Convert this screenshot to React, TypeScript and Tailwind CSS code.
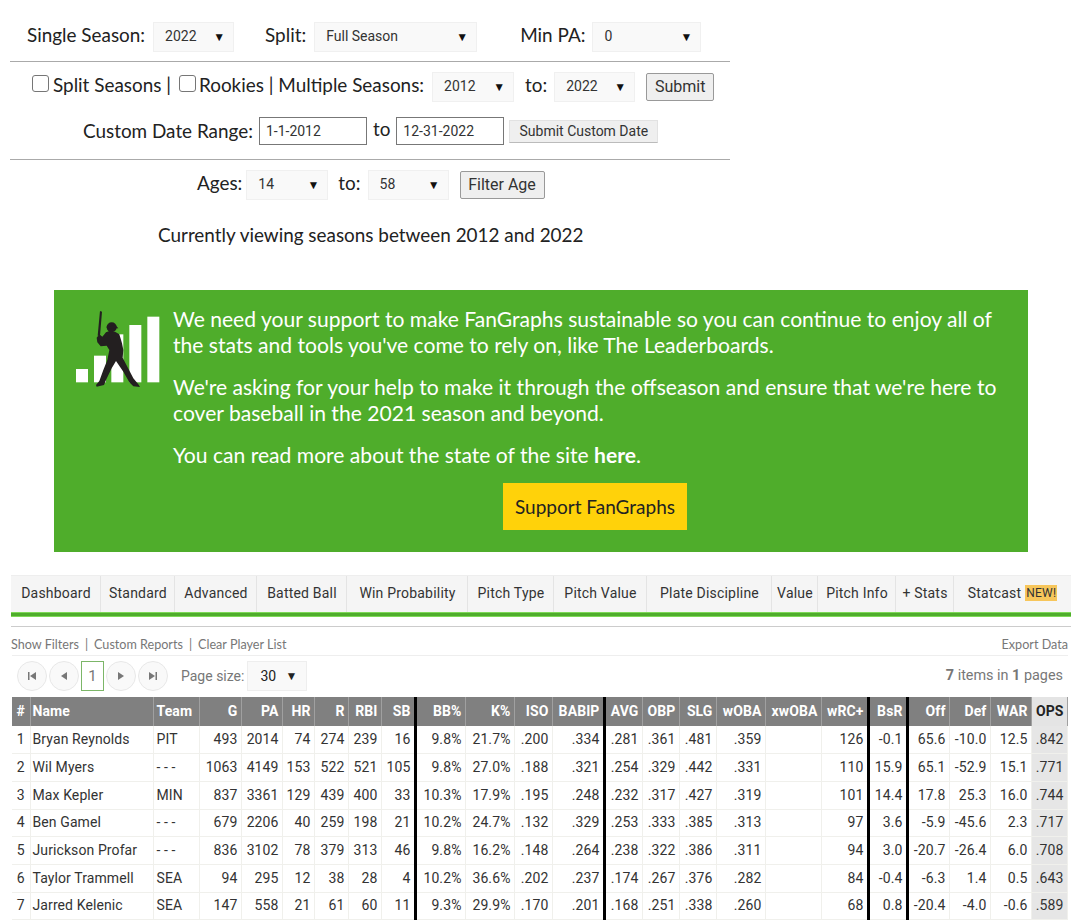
import type { ReactNode } from "react";

const columns = [
  { label: "#", width: "w-[18px]", align: "text-center" },
  { label: "Name", width: "w-[123px]", align: "text-left" },
  { label: "Team", width: "w-[46px]", align: "text-left" },
  { label: "G", width: "w-[42px]", align: "text-right" },
  { label: "PA", width: "w-[41px]", align: "text-right" },
  { label: "HR", width: "w-[32px]", align: "text-right" },
  { label: "R", width: "w-[34px]", align: "text-right" },
  { label: "RBI", width: "w-[33px]", align: "text-right" },
  { label: "SB", width: "w-[34px]", align: "text-right", thick: true },
  { label: "BB%", width: "w-[50px]", align: "text-right" },
  { label: "K%", width: "w-[49px]", align: "text-right" },
  { label: "ISO", width: "w-[38px]", align: "text-right" },
  { label: "BABIP", width: "w-[52px]", align: "text-right", thick: true },
  { label: "AVG", width: "w-[38px]", align: "text-right" },
  { label: "OBP", width: "w-[37px]", align: "text-right" },
  { label: "SLG", width: "w-[37px]", align: "text-right" },
  { label: "wOBA", width: "w-[49px]", align: "text-right" },
  { label: "xwOBA", width: "w-[56px]", align: "text-right" },
  { label: "wRC+", width: "w-[47px]", align: "text-right", thick: true },
  { label: "BsR", width: "w-[39px]", align: "text-right", thick: true },
  { label: "Off", width: "w-[42px]", align: "text-right" },
  { label: "Def", width: "w-[41px]", align: "text-right" },
  { label: "WAR", width: "w-[41px]", align: "text-right" },
  { label: "OPS", width: "w-[36px]", align: "text-right" },
];

const rows = [
  ["1", "Bryan Reynolds", "PIT", "493", "2014", "74", "274", "239", "16", "9.8%", "21.7%", ".200", ".334", ".281", ".361", ".481", ".359", "", "126", "-0.1", "65.6", "-10.0", "12.5", ".842"],
  ["2", "Wil Myers", "- - -", "1063", "4149", "153", "522", "521", "105", "9.8%", "27.0%", ".188", ".321", ".254", ".329", ".442", ".331", "", "110", "15.9", "65.1", "-52.9", "15.1", ".771"],
  ["3", "Max Kepler", "MIN", "837", "3361", "129", "439", "400", "33", "10.3%", "17.9%", ".195", ".248", ".232", ".317", ".427", ".319", "", "101", "14.4", "17.8", "25.3", "16.0", ".744"],
  ["4", "Ben Gamel", "- - -", "679", "2206", "40", "259", "198", "21", "10.2%", "24.7%", ".132", ".329", ".253", ".333", ".385", ".313", "", "97", "3.6", "-5.9", "-45.6", "2.3", ".717"],
  ["5", "Jurickson Profar", "- - -", "836", "3102", "78", "379", "313", "46", "9.8%", "16.2%", ".148", ".264", ".238", ".322", ".386", ".311", "", "94", "3.0", "-20.7", "-26.4", "6.0", ".708"],
  ["6", "Taylor Trammell", "SEA", "94", "295", "12", "38", "28", "4", "10.2%", "36.6%", ".202", ".237", ".174", ".267", ".376", ".282", "", "84", "-0.4", "-6.3", "1.4", "0.5", ".643"],
  ["7", "Jarred Kelenic", "SEA", "147", "558", "21", "61", "60", "11", "9.3%", "29.9%", ".170", ".201", ".168", ".251", ".338", ".260", "", "68", "0.8", "-20.4", "-4.0", "-0.6", ".589"],
];

const tabs = [
  { label: "Dashboard", width: "w-[90px]" },
  { label: "Standard", width: "w-[74px]" },
  { label: "Advanced", width: "w-[82px]" },
  { label: "Batted Ball", width: "w-[90px]" },
  { label: "Win Probability", width: "w-[121px]" },
  { label: "Pitch Type", width: "w-[86px]" },
  { label: "Pitch Value", width: "w-[93px]" },
  { label: "Plate Discipline", width: "w-[125px]" },
  { label: "Value", width: "w-[46px]" },
  { label: "Pitch Info", width: "w-[78px]" },
  { label: "+ Stats", width: "w-[58px]" },
];

function Select({ value, className }: { value: string; className: string }) {
  return (
    <span className={`relative block h-[30px] shrink-0 ${className}`}>
      <select
        defaultValue={value}
        className="block h-full w-full appearance-none border border-[#f0f0f0] bg-[#f9f9f9] pb-[2px] pl-[11px] font-['Roboto',sans-serif] text-[14px] text-[#333] outline-none"
      >
        <option>{value}</option>
      </select>
      <span className="pointer-events-none absolute right-[9px] top-[7px] text-[12px] leading-[16px] text-[#111]">▼</span>
    </span>
  );
}

function Label({ children, className = "" }: { children: ReactNode; className?: string }) {
  return <span className={`pb-[4px] ${className}`}>{children}</span>;
}

function GrayButton({ children, className }: { children: ReactNode; className: string }) {
  return (
    <button className={`shrink-0 rounded-[2px] border border-[#999] bg-[#efefef] font-['Roboto',sans-serif] text-[#333] ${className}`}>
      {children}
    </button>
  );
}

function PagerButton({ d, className = "" }: { d: string; className?: string }) {
  return (
    <span className={`flex h-[30px] w-[30px] items-center justify-center rounded-full border border-[#e8e8e8] bg-[#f9f9f9] ${className}`}>
      <svg viewBox="0 0 10 10" className="h-[10px] w-[10px] fill-[#777]">
        <path d={d} />
      </svg>
    </span>
  );
}

function BannerLogo() {
  return (
    <svg viewBox="0 0 300 270" className="h-[90px] w-[100px] shrink-0">
      <g fill="#fff">
        <rect x="18" y="192" width="36" height="40" />
        <rect x="72" y="152" width="36" height="80" />
        <rect x="124" y="88" width="36" height="144" />
        <rect x="178" y="60" width="36" height="172" />
        <rect x="232" y="35" width="36" height="197" />
      </g>
      <g fill="#231f20">
        <path d="M90 18 L96 20 L90 92 L83 92 Z" />
        <circle cx="125" cy="67" r="15" />
        <path d="M110 64 L138 62 L145 70 L112 72 Z" />
        <path d="M80 98 L88 88 L97 95 L108 82 L118 78 L135 80 L148 88 L156 115 L160 135 L158 158 L172 185 L190 220 L205 238 L210 246 L190 244 L178 232 L160 200 L138 168 L125 190 L108 225 L102 240 L80 245 L78 240 L88 228 L100 195 L112 165 L118 135 L110 122 L92 124 L82 112 Z" />
      </g>
    </svg>
  );
}

export default function App() {
  return (
    <div className="h-[922px] w-[1080px] overflow-hidden bg-white font-['Lato',sans-serif] text-[#222]">
      <div className="ml-[10px] w-[720px] pt-[22px] text-[18.9px]">
        <div className="flex h-[30px] items-center pl-[17px]">
          <Label>Single Season:</Label>
          <Select value="2022" className="ml-[8px] w-[81px]" />
          <Label className="ml-[31px]">Split:</Label>
          <Select value="Full Season" className="ml-[8px] w-[163px]" />
          <Label className="ml-[43px]">Min PA:</Label>
          <Select value="0" className="ml-[7px] w-[109px]" />
        </div>
        <hr className="mt-[9px] border-t-[1px] border-[#aaa]" />
        <div className="mt-[10px] flex h-[30px] items-center pl-[22px]">
          <input type="checkbox" className="mb-[8px] h-[17px] w-[17px] appearance-none rounded-[3px] border border-[#767676] bg-white" />
          <Label className="ml-[4px]">Split Seasons |</Label>
          <input type="checkbox" className="mb-[8px] ml-[8px] h-[17px] w-[17px] appearance-none rounded-[3px] border border-[#767676] bg-white" />
          <Label className="ml-[3px]">Rookies | Multiple Seasons:</Label>
          <Select value="2012" className="ml-[8px] w-[82px]" />
          <Label className="ml-[11px]">to:</Label>
          <Select value="2022" className="ml-[7px] w-[81px]" />
          <GrayButton className="ml-[11px] h-[28px] w-[68px] text-[16px]">Submit</GrayButton>
        </div>
        <div className="mt-[15px] flex h-[28px] items-center pl-[73px]">
          <span>Custom Date Range:</span>
          <input defaultValue="1-1-2012" className="ml-[6px] h-[28px] w-[108px] border border-[#777] bg-white px-[6px] font-['Roboto',sans-serif] text-[14px] text-[#333]" />
          <Label className="ml-[6px]">to</Label>
          <input defaultValue="12-31-2022" className="ml-[6px] h-[28px] w-[108px] border border-[#777] bg-white px-[6px] font-['Roboto',sans-serif] text-[14px] text-[#333]" />
          <button className="ml-[5px] h-[23px] w-[149px] border border-[#e2e2e2] border-b-[#bbb] bg-[#efefef] font-['Roboto',sans-serif] text-[14px] text-[#333]">
            Submit Custom Date
          </button>
        </div>
        <hr className="mt-[14px] border-t-[1px] border-[#aaa]" />
        <div className="mt-[10px] flex h-[30px] items-center pl-[187px]">
          <Label>Ages:</Label>
          <Select value="14" className="ml-[4px] w-[82px]" />
          <Label className="ml-[10px]">to:</Label>
          <Select value="58" className="ml-[7px] w-[81px]" />
          <GrayButton className="ml-[11px] mb-[1px] h-[28px] w-[85px] text-[16px]">Filter Age</GrayButton>
        </div>
        <p className="mt-[20px] pl-[148px] leading-[30px]">Currently viewing seasons between 2012 and 2022</p>
      </div>

      <section className="ml-[54px] mt-[40px] flex h-[262px] w-[974px] bg-[#4fad2b] text-[21.1px] leading-[26px] text-white">
        <div className="ml-[16px] mt-[15px]">
          <BannerLogo />
        </div>
        <div className="ml-[3px] mt-[16px] w-[845px]">
          <p>We need your support to make FanGraphs sustainable so you can continue to enjoy all of the stats and tools you've come to rely on, like The Leaderboards.</p>
          <p className="mt-[16px]">We're asking for your help to make it through the offseason and ensure that we're here to cover baseball in the 2021 season and beyond.</p>
          <p className="mt-[16px]">You can read more about the state of the site <b>here</b>.</p>
          <button className="ml-[330px] mt-[15px] h-[47px] w-[184px] bg-[#ffd20a] text-[19px] text-[#222]">Support FanGraphs</button>
        </div>
      </section>

      <nav className="ml-[11px] mt-[23px] flex h-[37px] w-[1060px] border-t border-[#eee] bg-[#f5f5f5] font-['Roboto',sans-serif] text-[14px] tracking-[0.2px] text-[#333]">
        {tabs.map((tab) => (
          <a key={tab.label} className={`flex items-center justify-center border-r border-[#e4e4e4] pb-[2px] pl-[1px] ${tab.width}`}>
            {tab.label}
          </a>
        ))}
        <a className="flex w-[117px] items-center justify-center gap-[4px] pb-[2px]">
          Statcast
          <span className="bg-[#f7c65b] px-[1px] text-[12px] leading-[16px]">NEW!</span>
        </a>
      </nav>
      <div className="ml-[11px] h-[5px] w-[1060px] border-y border-[#7ed957] bg-[#4fad2b]" />
      <hr className="ml-[11px] mt-[9px] w-[1060px] border-t border-[#ccc]" />

      <div className="ml-[11px] mt-[11px] flex h-[14px] w-[1057px] items-center justify-between text-[12.6px] text-[#777]">
        <div className="flex gap-[6px]">
          <span>Show Filters</span>
          <span>|</span>
          <span>Custom Reports</span>
          <span>|</span>
          <span>Clear Player List</span>
        </div>
        <span>Export Data</span>
      </div>

      <div className="ml-[12px] mt-[3px] flex h-[42px] w-[1056px] items-center border-t border-[#eee] pb-[1px] pl-[5px] pr-[5px] font-['Roboto',sans-serif] text-[14px] text-[#777]">
        <PagerButton d="M1 1h1.5v8H1zM9 1v8L3 5z" />
        <PagerButton d="M8 1v8L2 5z" className="ml-[2px]" />
        <span className="ml-[2px] flex h-[30px] w-[23px] items-center justify-center border border-[#7cb668] text-[15px]">1</span>
        <PagerButton d="M2 1v8l6-4z" className="ml-[2px]" />
        <PagerButton d="M1 1v8l6-4zM7.5 1H9v8H7.5z" className="ml-[2px]" />
        <span className="ml-[13px]">Page size:</span>
        <span className="relative ml-[3px] flex h-[30px] w-[60px] items-center border border-[#eee] bg-[#f9f9f9] pl-[12px] text-[#222]">
          30
          <span className="absolute right-[9px] top-[6px] text-[12px] leading-[16px]">▼</span>
        </span>
        <span className="ml-auto text-[14.4px]"><b>7</b> items in <b>1</b> pages</span>
      </div>

      <table className="ml-[12px] w-[1055px] table-fixed border-collapse font-['Roboto',sans-serif] text-[14px] tracking-[0.1px] text-[#333]">
        <colgroup>
          {columns.map((col) => (
            <col key={col.label} className={col.width} />
          ))}
        </colgroup>
        <thead>
          <tr className="h-[29px]">
            {columns.map((col) => (
              <th
                key={col.label}
                className={`overflow-hidden whitespace-nowrap py-0 pr-[3px] font-bold ${col.label === "Name" ? "pl-[2px]" : "pl-[3px]"} ${col.align} ${
                  col.label === "OPS" ? "bg-[#e4e4e4] text-[#222]" : "bg-[#808080] text-white"
                } ${col.thick ? "border-r-[3px] border-r-black" : "border-r border-r-[#a0a0a0]"}`}
              >
                {col.label}
              </th>
            ))}
          </tr>
        </thead>
        <tbody>
          {rows.map((row) => (
            <tr key={row[0]} className="h-[27.7px] border-b border-[#f0f0ec]">
              {row.map((value, i) => (
                <td
                  key={columns[i].label}
                  className={`overflow-hidden whitespace-nowrap pr-[3px] ${i === 1 ? "pl-[2px]" : "pl-[3px]"} ${columns[i].align} ${
                    columns[i].thick ? "border-r-[3px] border-r-black" : "border-r border-r-[#f0f0ec]"
                  } ${columns[i].label === "OPS" ? "bg-[#e6e6e6]" : ""}`}
                >
                  {value}
                </td>
              ))}
            </tr>
          ))}
        </tbody>
      </table>
    </div>
  );
}
